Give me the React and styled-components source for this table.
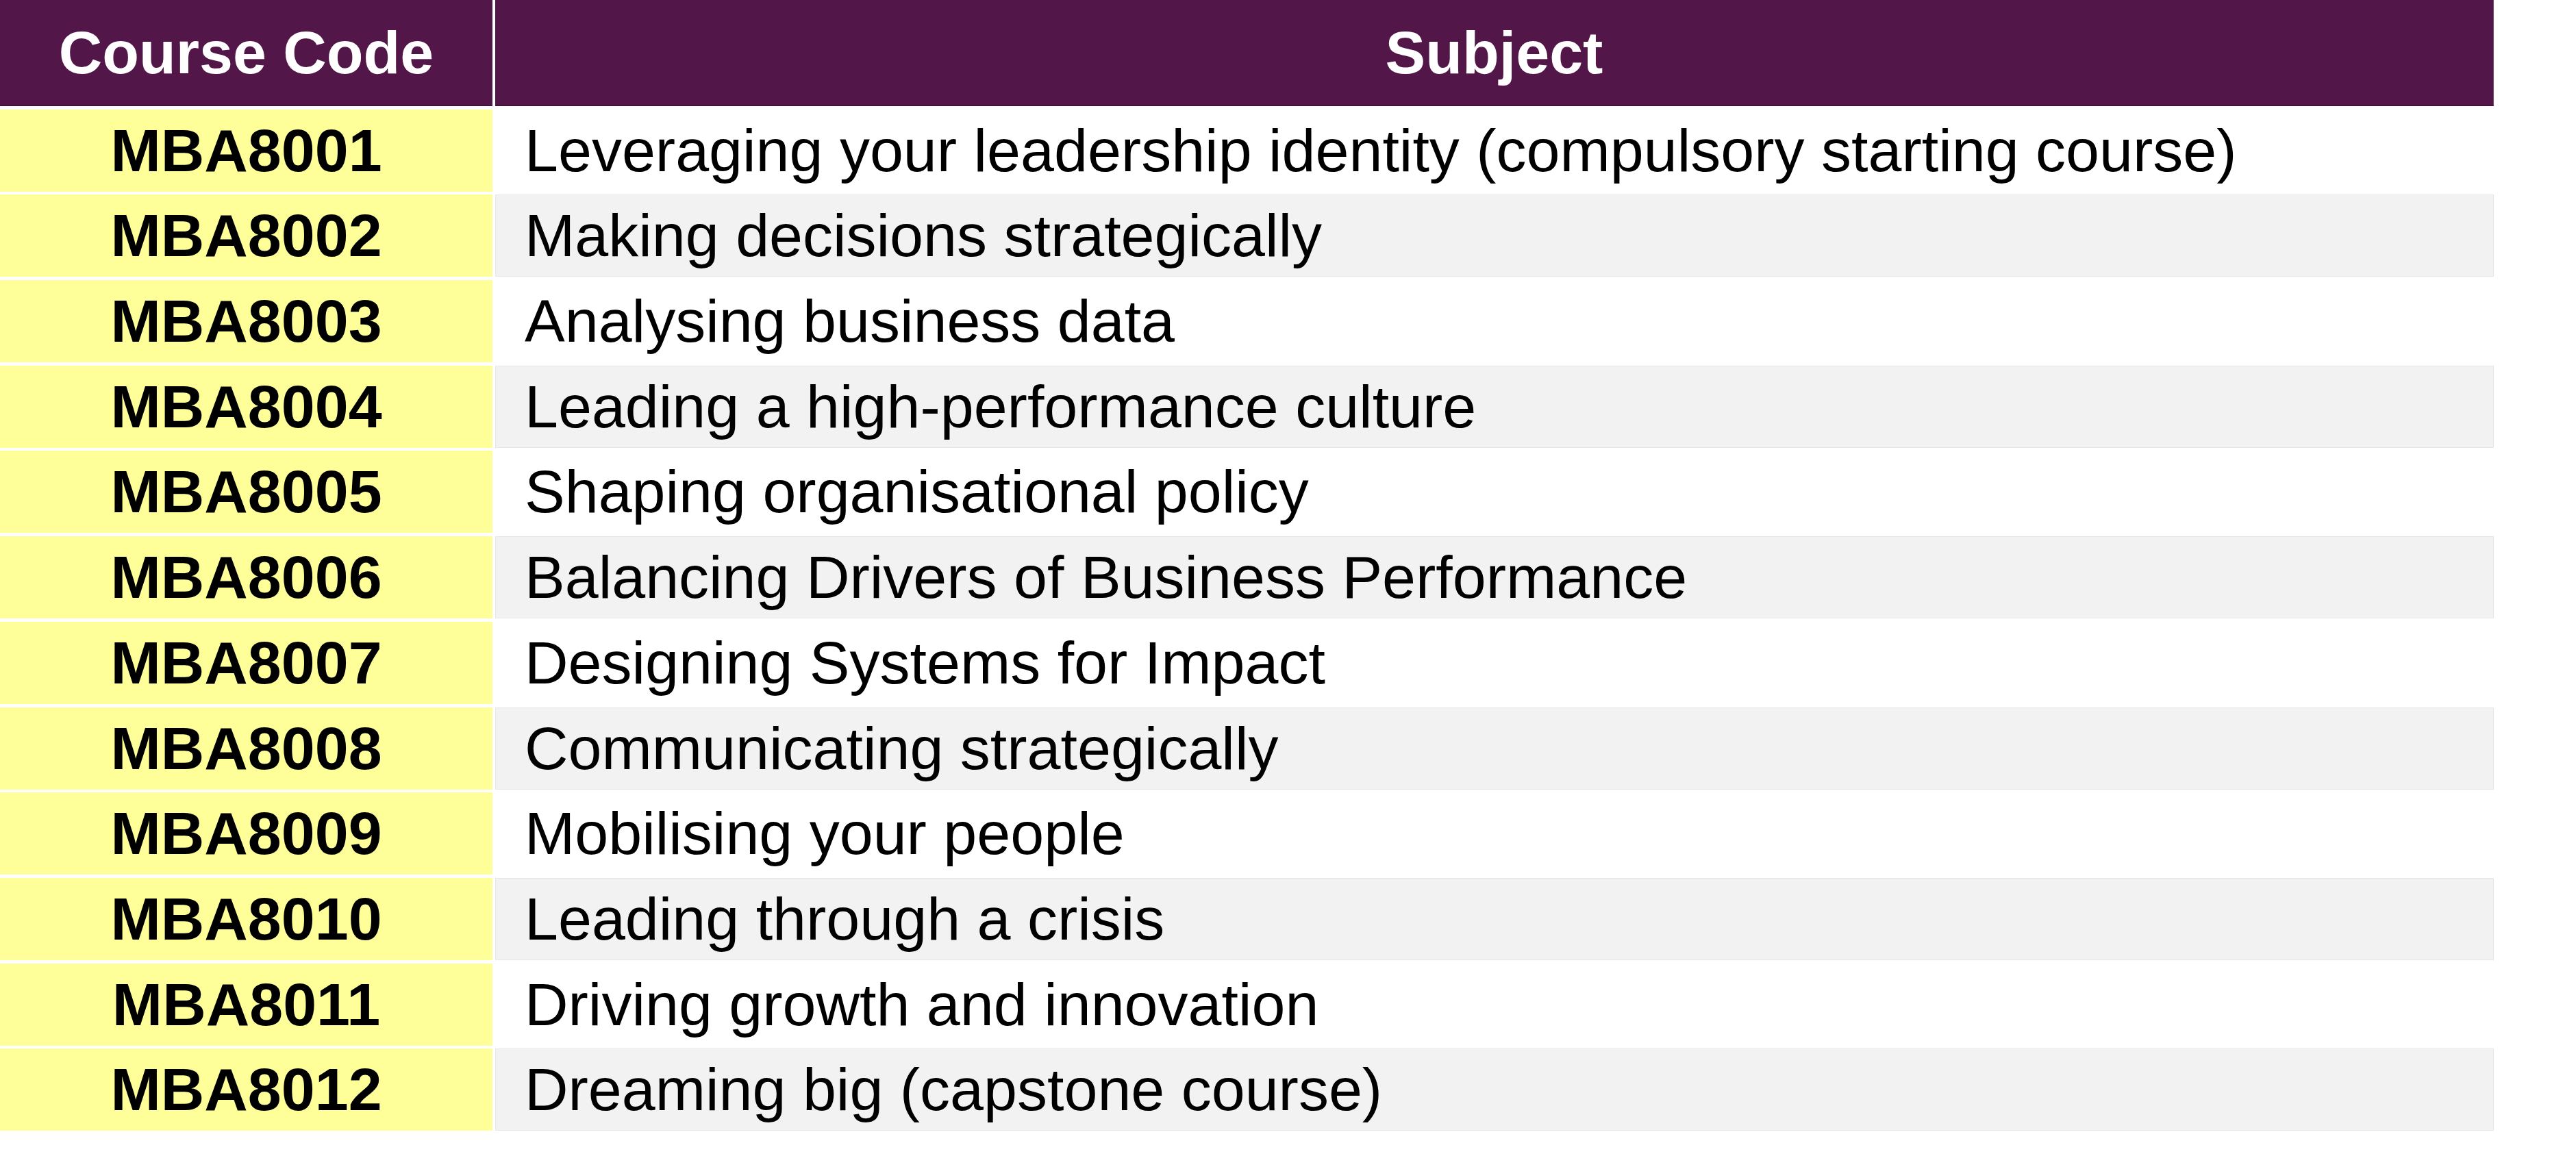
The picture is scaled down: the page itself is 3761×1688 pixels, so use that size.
import React from 'react';
import styled, {createGlobalStyle} from 'styled-components';

const GlobalStyle = createGlobalStyle`
    html, body {
        margin: 0;
        padding: 0;
        background: #ffffff;
    }
    body {
        font-family: "Liberation Sans", Arial, sans-serif;
        color: #000000;
    }
`;

const courses = [
    {code: "MBA8001", subject: "Leveraging your leadership identity (compulsory starting course)"},
    {code: "MBA8002", subject: "Making decisions strategically"},
    {code: "MBA8003", subject: "Analysing business data"},
    {code: "MBA8004", subject: "Leading a high-performance culture"},
    {code: "MBA8005", subject: "Shaping organisational policy"},
    {code: "MBA8006", subject: "Balancing Drivers of Business Performance"},
    {code: "MBA8007", subject: "Designing Systems for Impact"},
    {code: "MBA8008", subject: "Communicating strategically"},
    {code: "MBA8009", subject: "Mobilising your people"},
    {code: "MBA8010", subject: "Leading through a crisis"},
    {code: "MBA8011", subject: "Driving growth and innovation"},
    {code: "MBA8012", subject: "Dreaming big (capstone course)"},
];

const Table = styled.div`
    display: flex;
    flex-direction: column;
    gap: 4.7px;
    width: 3641px;
`;

const Row = styled.div`
    display: grid;
    grid-template-columns: 719px 1fr;
    column-gap: 4px;
    height: ${props => props.$header ? "155px" : "120px"};
`;

const HeaderCell = styled.div`
    display: flex;
    align-items: center;
    justify-content: center;
    background: #521748;
    color: #ffffff;
    font-size: 88px;
    font-weight: bold;
    box-sizing: border-box;
    border-right: ${props => props.$last ? "1px solid #7e4d75" : "none"};
    border-bottom: 1px solid #3f0a36;
`;

const CodeCell = styled.div`
    display: flex;
    align-items: center;
    justify-content: center;
    background: #ffff99;
    font-size: 88px;
    font-weight: bold;
`;

const SubjectCell = styled.div`
    display: flex;
    align-items: center;
    box-sizing: border-box;
    padding-left: 42px;
    background: ${props => props.$shaded ? "#f2f2f2" : "#ffffff"};
    border: 1px solid ${props => props.$shaded ? "#e7e7e7" : "#ffffff"};
    font-size: 88px;
    white-space: nowrap;
`;

export default function App() {
    return (
        <>
            <GlobalStyle/>
            <Table>
                <Row $header>
                    <HeaderCell>Course Code</HeaderCell>
                    <HeaderCell $last>Subject</HeaderCell>
                </Row>
                {courses.map((course, index) => (
                    <Row key={course.code}>
                        <CodeCell>{course.code}</CodeCell>
                        <SubjectCell $shaded={index % 2 === 1}>{course.subject}</SubjectCell>
                    </Row>
                ))}
            </Table>
        </>
    );
}
